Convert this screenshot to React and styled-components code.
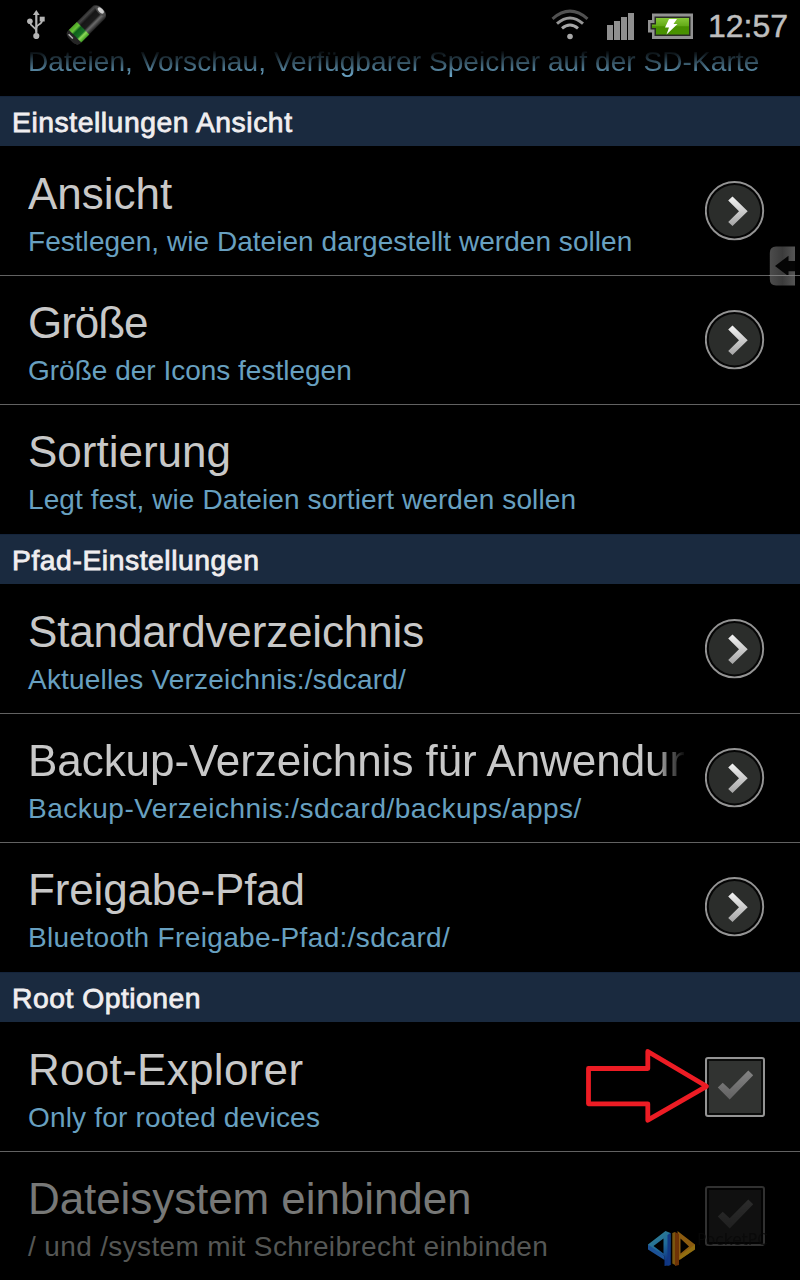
import styled, { createGlobalStyle, css } from "styled-components";

const viewItems = [
    { title: "Ansicht", titleGap: 0, summary: "Festlegen, wie Dateien dargestellt werden sollen", gap: 0.04, widget: "arrow" },
    { title: "Größe", titleGap: -1.05, summary: "Größe der Icons festlegen", gap: 0, widget: "arrow" },
    { title: "Sortierung", titleGap: 0, summary: "Legt fest, wie Dateien sortiert werden sollen", gap: 0.11 },
];

const pathItems = [
    { title: "Standardverzeichnis", titleGap: -0.14, summary: "Aktuelles Verzeichnis:/sdcard/", gap: 0.2, widget: "arrow" },
    { title: "Backup-Verzeichnis für Anwendungen", titleGap: -0.06, summary: "Backup-Verzeichnis:/sdcard/backups/apps/", gap: 0.5, widget: "arrow" },
    { title: "Freigabe-Pfad", titleGap: -0.15, summary: "Bluetooth Freigabe-Pfad:/sdcard/", gap: 0.35, widget: "arrow" },
];

const rootItems = [
    { title: "Root-Explorer", titleGap: 0.3, summary: "Only for rooted devices", gap: 0.18, widget: "check" },
    { title: "Dateisystem einbinden", titleGap: -0.08, summary: "/ und /system mit Schreibrecht einbinden", gap: 0.36, widget: "check", disabled: true },
];

function UsbIcon() {
    return (
        <svg width="20" height="30" viewBox="26 9 20 30" fill="none" stroke="#b4b4b4" strokeWidth="1.7">
            <path d="M36.3 14v20" strokeWidth="2.2" />
            <path d="M36.3 10l3.4 5h-6.8z" fill="#b4b4b4" stroke="none" />
            <path d="M30 22c0 5 6.3 4.5 6.3 9.5M42.2 20c0 5-5.9 4-5.9 8" />
            <circle cx="29.9" cy="21.3" r="2.8" fill="#b4b4b4" stroke="none" />
            <rect x="39.7" y="16.7" width="5" height="4.8" fill="#b4b4b4" stroke="none" />
            <circle cx="36.3" cy="36" r="3.1" fill="#b4b4b4" stroke="none" />
        </svg>
    );
}

function BatteryAppIcon() {
    return (
        <svg width="46" height="46" viewBox="63 2 46 46">
            <defs>
                <linearGradient id="shell" x1="0" x2="1" y1="0" y2="0">
                    <stop offset="0" stopColor="#2c2c2c" />
                    <stop offset="0.12" stopColor="#444" />
                    <stop offset="0.3" stopColor="#161616" />
                    <stop offset="0.6" stopColor="#1c1c1c" />
                    <stop offset="0.75" stopColor="#6c6c6c" />
                    <stop offset="1" stopColor="#1c1c1c" />
                </linearGradient>
                <linearGradient id="charge" x1="0" x2="1" y1="0" y2="0">
                    <stop offset="0" stopColor="#4da422" />
                    <stop offset="0.22" stopColor="#68c43a" />
                    <stop offset="0.36" stopColor="#0e5f1b" />
                    <stop offset="0.66" stopColor="#187426" />
                    <stop offset="0.78" stopColor="#8fdc58" />
                    <stop offset="1" stopColor="#3a9a20" />
                </linearGradient>
            </defs>
            <g transform="translate(86.3 25) rotate(45)">
                <rect x="-8.8" y="-21" width="17.6" height="42" rx="4" fill="url(#shell)" />
                <rect x="-8.8" y="4.5" width="17.6" height="11.5" fill="url(#charge)" />
                <ellipse cx="0" cy="-20" rx="7" ry="3" fill="#4a4a4a" />
                <ellipse cx="0" cy="-20.5" rx="3.8" ry="2" fill="#cfcfcf" />
                <path d="M-8.8 16h17.6v1q-2 5-6 5h-5.6q-4 0-6-5z" fill="#252525" />
                <path d="M-6 19h6" stroke="#b5b5b5" strokeWidth="1.500" />
            </g>
        </svg>
    );
}

function WifiIcon() {
    return (
        <svg width="38" height="32" viewBox="551 9 38 32" fill="none" strokeWidth="3">
            <path d="M552.5 18.800Q570 3.5 587.5 18.8" stroke="#515151" />
            <path d="M557 23.6Q570 12.4 583 23.6" stroke="#969696" />
            <path d="M562 28.3Q570 21.6 578 28.3" stroke="#a8a8a8" />
            <circle cx="570" cy="36.5" r="2.8" fill="#a8a8a8" />
        </svg>
    );
}

function SignalIcon() {
    return (
        <svg width="28" height="28" viewBox="0 0 28 28" fill="#8f8f8f">
            <rect x="0" y="12" width="6" height="15" />
            <rect x="7" y="8" width="6" height="19" />
            <rect x="14" y="4" width="6" height="23" />
            <rect x="21" y="0" width="6" height="27" />
        </svg>
    );
}

function ChargingIcon() {
    return (
        <svg width="46" height="27" viewBox="0 0 46 27">
            <defs>
                <linearGradient id="cell" x1="0" x2="0" y1="0" y2="1">
                    <stop offset="0" stopColor="#86c837" />
                    <stop offset="0.5" stopColor="#62a916" />
                    <stop offset="0.52" stopColor="#489000" />
                    <stop offset="1" stopColor="#489200" />
                </linearGradient>
            </defs>
            <path d="M4 0.5h41v25.5H4V19.5H0V7h4z" fill="#929292" />
            <path d="M6.5 3.5h36v19.500h-36v-6.500h-4V10h4z" fill="#292b25" />
            <path d="M8 5h33v16.500H8v-6.500H4V11.500h4z" fill="url(#cell)" />
            <path d="M21 6h8l-3.5 5h4L18.5 21.5l2.5-7h-4z" fill="#fff" />
        </svg>
    );
}

function Chevron() {
    return (
        <svg width="60" height="60" viewBox="0 0 60 60">
            <defs>
                <linearGradient id="chevron" x1="0" x2="0" y1="0" y2="1">
                    <stop offset="0" stopColor="#f4f4f4" />
                    <stop offset="1" stopColor="#a4a4a4" />
                </linearGradient>
            </defs>
            <circle cx="29.5" cy="29.7" r="28.7" fill="#050505" stroke="#949494" strokeWidth="1.9" />
            <circle cx="29.5" cy="29.7" r="25.7" fill="#2b2d2b" />
            <path d="M27.5 15.500L42.7 30.300L27.5 45.100L23.2 41L34 30.300L23.2 19.600z" fill="url(#chevron)" />
        </svg>
    );
}

function Check() {
    return (
        <svg width="60" height="60" viewBox="0 0 60 60">
            <defs>
                <linearGradient id="check" x1="0" x2="0" y1="0" y2="1">
                    <stop offset="0" stopColor="#848484" />
                    <stop offset="1" stopColor="#626262" />
                </linearGradient>
            </defs>
            <rect x="1" y="1" width="58" height="58" rx="2" fill="#0b0c0b" stroke="#949494" strokeWidth="2" />
            <rect x="4" y="4" width="52" height="52" fill="#313331" />
            <path d="M17.7 25.700L24.700 32.300L43.300 13.500L48.200 18.300L24.700 42.500L12.800 30.400z" fill="url(#check)" />
        </svg>
    );
}

function EdgeTab() {
    return (
        <svg width="26" height="40" viewBox="0 0 26 40">
            <defs>
                <linearGradient id="tab" x1="0" x2="1" y1="0" y2="0">
                    <stop offset="0" stopColor="#4c4c4c" />
                    <stop offset="0.5" stopColor="#3b3b3b" />
                    <stop offset="1" stopColor="#555" />
                </linearGradient>
            </defs>
            <path d="M26 0.5H7Q0.8 0.5 0.8 7V33Q0.8 39.5 7 39.5H26z" fill="url(#tab)" />
            <path d="M6 20L19.5 9.7V15H26V25.2H19.5V30.3z" fill="#050505" />
            <path d="M0 29.5H26" stroke="#7a7a7a" />
        </svg>
    );
}

function RedArrow() {
    return (
        <svg width="126" height="76" viewBox="585 1048 126 76">
            <path
                d="M588.5 1068.500H647.800V1051.500L706.500 1086.300L647.800 1120.200V1103.800H588.500z"
                fill="none"
                stroke="#ed1c24"
                strokeWidth="4.8"
                strokeLinejoin="round"
            />
        </svg>
    );
}

function WatermarkLogo() {
    return (
        <svg width="48" height="36" viewBox="648 1231 48 36">
            <defs>
                <linearGradient id="blue" x1="0" x2="0.5" y1="0" y2="1">
                    <stop offset="0" stopColor="#3f96a0" />
                    <stop offset="0.6" stopColor="#2377ab" />
                    <stop offset="1" stopColor="#123c91" />
                </linearGradient>
            </defs>
            <path d="M665.5 1231L670.5 1233V1265L664.500 1266V1256L648 1247V1244.500zM663.500 1238.500L653.500 1246L663.500 1253.500z" fill="url(#blue)" fillRule="evenodd" />
            <path d="M667.5 1235L670.500 1233V1265L667.500 1266z" fill="#133f93" />
            <path d="M648 1244.500L664.500 1256V1260L648 1249.500z" fill="#205ba8" />
            <path d="M677.500 1231L695 1244.500V1249L679 1260zM680.500 1238.500V1253.500L689 1246.500z" fill="#9b6512" fillRule="evenodd" />
            <path d="M695 1244.500V1249.500L679.500 1260V1256z" fill="#a17a13" />
            <path d="M672.300 1233L675 1232V1265L672.300 1263.500z" fill="#886011" />
            <path d="M675 1232L679 1234V1265L675 1266z" fill="#7a3908" />
        </svg>
    );
}

function Preference({ item }) {
    return (
        <Row>
            <Labels $disabled={item.disabled}>
                <Title $gap={item.titleGap} $fade={item.title.length > 25}>{item.title}</Title>
                <Summary $gap={item.gap}>{item.summary}</Summary>
            </Labels>
            <Widget $disabled={item.disabled}>
                {item.widget === "arrow" && <Chevron />}
                {item.widget === "check" && <Check />}
            </Widget>
        </Row>
    );
}

function Group({ heading, gap, items }) {
    return (
        <section>
            <Heading $gap={gap}>{heading}</Heading>
            <Rows>
                {items.map((item) => (
                    <Preference key={item.title} item={item} />
                ))}
            </Rows>
        </section>
    );
}

export default function App() {
    return (
        <Screen>
            <GlobalStyle />
            <StatusBar>
                <Notifications>
                    <UsbIcon />
                    <BatteryAppIcon />
                </Notifications>
                <SystemIcons>
                    <WifiIcon />
                    <SignalIcon />
                    <ChargingIcon />
                    <Clock>12:57</Clock>
                </SystemIcons>
            </StatusBar>
            <ScrolledRow>
                <Summary $gap={0.08}>Dateien, Vorschau, Verfügbarer Speicher auf der SD-Karte</Summary>
            </ScrolledRow>
            <Group heading="Einstellungen Ansicht" gap={0.55} items={viewItems} />
            <Group heading="Pfad-Einstellungen" gap={0.55} items={pathItems} />
            <Group heading="Root Optionen" gap={0.5} items={rootItems} />
            <TabOverlay>
                <EdgeTab />
            </TabOverlay>
            <ArrowOverlay>
                <RedArrow />
            </ArrowOverlay>
            <Watermark>
                <WatermarkLogo />
                <WatermarkText>PocketPC</WatermarkText>
            </Watermark>
        </Screen>
    );
}

const GlobalStyle = createGlobalStyle`
    body {
        margin: 0;
        background: #000;
    }
    svg {
        display: block;
        flex: none;
    }
`;

const Screen = styled.div`
    position: relative;
    width: 800px;
    height: 1280px;
    overflow: hidden;
    background: #000;
    font-family: "Liberation Sans", Arial, sans-serif;
    white-space: nowrap;
`;

const StatusBar = styled.header`
    display: flex;
    justify-content: space-between;
    box-sizing: border-box;
    height: 50px;
    padding: 0 10px 0 26px;
`;

const Notifications = styled.div`
    display: flex;
    gap: 17px;
    padding-top: 2px;

    svg:first-child {
        margin-top: 7px;
    }
`;

const SystemIcons = styled.div`
    display: flex;
    align-items: flex-start;

    svg {
        margin-top: 9px;
    }
    svg:nth-child(2) {
        margin: 13px 0 0 18px;
    }
    svg:nth-child(3) {
        margin: 12.5px 0 0 13px;
    }
`;

const Clock = styled.div`
    width: 82px;
    margin-left: 14px;
    padding-top: 8px;
    font-size: 32px;
    line-height: 36px;
    color: #bebebe;
    -webkit-text-stroke: 0.5px #bebebe;
`;

const ScrolledRow = styled.div`
    display: flex;
    align-items: flex-end;
    height: 46px;
    box-sizing: border-box;
    padding: 0 0 18px 28px;
    overflow: hidden;
    color: #68a0c0;
    mask-image: linear-gradient(transparent 0, #000 25px);
`;

const Heading = styled.h2`
    height: 50px;
    box-sizing: border-box;
    margin: 0;
    padding: 10px 0 0 12px;
    border-top: 1px solid #14243b;
    background: #1a2a3f;
    font-size: 28.3px;
    font-weight: 400;
    line-height: 31px;
    letter-spacing: ${(p) => p.$gap}px;
    color: #f0eef0;
    -webkit-text-stroke: 0.8px #f0eef0;
`;

const Rows = styled.div`
    padding-bottom: 1px;
`;

const Row = styled.div`
    display: flex;
    align-items: center;
    box-sizing: border-box;
    height: 129px;
    padding: 0 35px 0 28px;

    & + & {
        box-shadow: inset 0 1px #626262;
    }
`;

const Labels = styled.div`
    flex: 1;
    min-width: 0;
    align-self: flex-start;
    padding-top: 23px;
    color: ${(p) => (p.$disabled ? "#555755" : "#68a0c0")};

    h3 {
        color: ${(p) => (p.$disabled ? "#777877" : "#c8c8c8")};
    }
`;

const Title = styled.h3`
    width: 656px;
    margin: 0 0 7px;
    overflow: hidden;
    font-size: 44px;
    font-weight: 400;
    line-height: 50px;
    letter-spacing: ${(p) => p.$gap}px;
    ${(p) => p.$fade && css`
        mask-image: linear-gradient(to right, #000 626px, transparent 658px);
    `}
`;

const Summary = styled.div`
    font-size: 28px;
    line-height: 32px;
    letter-spacing: ${(p) => p.$gap}px;
`;

const Widget = styled.div`
    flex: none;
    padding-top: 1px;
    opacity: ${(p) => (p.$disabled ? 0.33 : 1)};
`;

const TabOverlay = styled.div`
    position: absolute;
    left: 769px;
    top: 246px;
`;

const ArrowOverlay = styled.div`
    position: absolute;
    left: 585px;
    top: 1048px;
`;

const Watermark = styled.div`
    position: absolute;
    left: 648px;
    top: 1231px;
    display: flex;
    gap: 1px;
    opacity: 0.9;
`;

const WatermarkText = styled.span`
    font-family: "DejaVu Sans", sans-serif;
    font-size: 15.5px;
    line-height: 19px;
    color: rgb(8 8 8 / 85%);
`;
